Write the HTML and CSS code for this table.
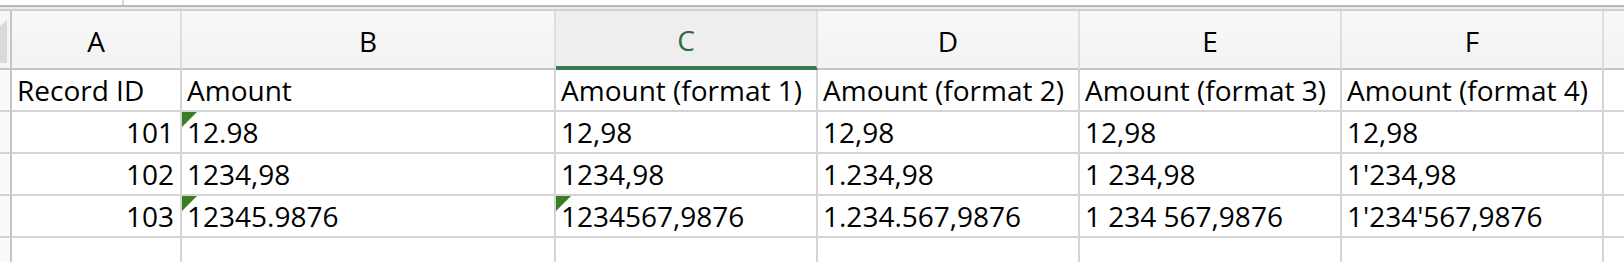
FILE: index.html
```html
<!DOCTYPE html>
<html>
<head>
<meta charset="utf-8">
<link rel="stylesheet" href="styles.css">
</head>
<body>
<div class="topbar"><div class="topbar-divider"></div></div>
<div class="frame-line"></div>
<div class="sheet">
  <div class="corner"><svg width="10" height="57" viewBox="0 0 10 57"><polygon points="0,15 7,9 7,52 0,52" fill="#d9d9d9"/></svg></div>
  <div class="colhead">A</div>
  <div class="colhead">B</div>
  <div class="colhead selected">C</div>
  <div class="colhead">D</div>
  <div class="colhead">E</div>
  <div class="colhead">F</div>
  <div class="colhead last"></div>

  <div class="rowhead"></div>
  <div class="cell">Record ID</div>
  <div class="cell">Amount</div>
  <div class="cell">Amount (format 1)</div>
  <div class="cell">Amount (format 2)</div>
  <div class="cell">Amount (format 3)</div>
  <div class="cell">Amount (format 4)</div>
  <div class="cell last"></div>

  <div class="rowhead"></div>
  <div class="cell num">101</div>
  <div class="cell flag">12.98</div>
  <div class="cell">12,98</div>
  <div class="cell">12,98</div>
  <div class="cell">12,98</div>
  <div class="cell">12,98</div>
  <div class="cell last"></div>

  <div class="rowhead"></div>
  <div class="cell num">102</div>
  <div class="cell">1234,98</div>
  <div class="cell">1234,98</div>
  <div class="cell">1.234,98</div>
  <div class="cell">1 234,98</div>
  <div class="cell">1'234,98</div>
  <div class="cell last"></div>

  <div class="rowhead"></div>
  <div class="cell num">103</div>
  <div class="cell flag">12345.9876</div>
  <div class="cell flag">1234567,9876</div>
  <div class="cell">1.234.567,9876</div>
  <div class="cell">1 234 567,9876</div>
  <div class="cell">1'234'567,9876</div>
  <div class="cell last"></div>

  <div class="rowhead open"></div>
  <div class="cell open"></div>
  <div class="cell open"></div>
  <div class="cell open"></div>
  <div class="cell open"></div>
  <div class="cell open"></div>
  <div class="cell open"></div>
  <div class="cell open last"></div>
</div>
</body>
</html>
```
FILE: styles.css
```css
html, body {
  margin: 0;
  padding: 0;
  background: #ffffff;
  overflow: hidden;
}
body {
  width: 1624px;
  height: 262px;
  font-family: "Open Sans", "Lato", sans-serif;
  color: #000;
}
.topbar {
  height: 5px;
  background: #ffffff;
}
.topbar-divider {
  margin-left: 122px;
  width: 2px;
  height: 5px;
  background: #d6d6d6;
}
.frame-line {
  height: 2px;
  border-top: 2px solid #b9b9b9;
  border-bottom: 2px solid #cfcfcf;
  background: #ececec;
}
.sheet {
  display: grid;
  grid-template-columns: 12px 170px 374px 262px 262px 262px 262px 1fr;
  grid-template-rows: 59px 42px 42px 42px 42px 24px;
}
.sheet > div {
  box-sizing: border-box;
  border-right: 2px solid #d4d4d4;
  border-bottom: 2px solid #d4d4d4;
  white-space: nowrap;
  overflow: hidden;
}
.sheet > .last {
  border-right: none;
}
.sheet > .open {
  border-bottom: none;
}
.corner {
  background: #f6f6f6;
  border-right-color: #c4c4c4 !important;
  border-bottom-color: #c4c4c4 !important;
}
.corner svg {
  display: block;
}
.colhead {
  background: linear-gradient(#f8f8f8, #f3f3f3);
  border-right-color: #dedede !important;
  border-bottom-color: #c4c4c4 !important;
  text-align: center;
  font-size: 28px;
  line-height: 54px;
  padding-top: 3px;
}
.colhead.selected {
  background: #eeeeee;
  color: #2d6b3c;
  border-bottom: 4px solid #387a4a !important;
  line-height: 51px;
  padding-top: 4px;
}
.rowhead {
  background: #fafafa;
  border-right-color: #c4c4c4 !important;
}
.cell {
  font-size: 28px;
  line-height: 40px;
  padding: 0 5px;
  position: relative;
}
.cell.num {
  text-align: right;
  padding-right: 6px;
}
.cell.flag::before {
  content: "";
  position: absolute;
  left: 0;
  top: 0;
  width: 15px;
  height: 15px;
  background: #3a7d22;
  clip-path: polygon(0 0, 100% 0, 0 100%);
}
```
